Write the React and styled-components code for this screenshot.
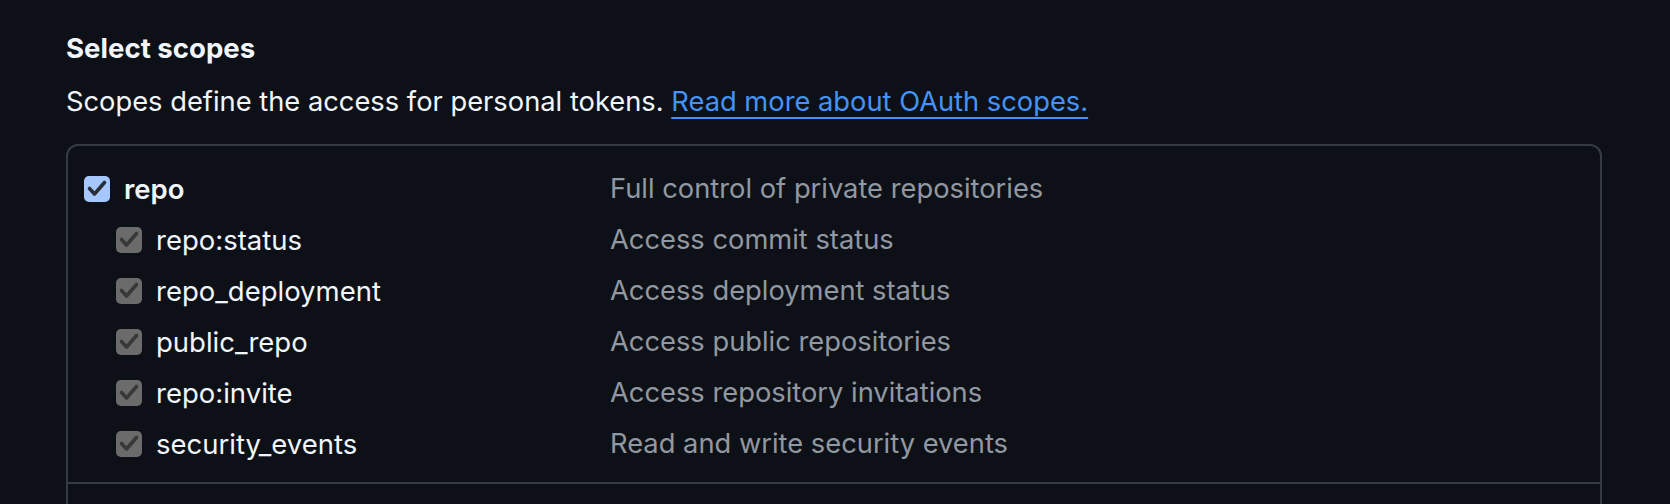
import React from 'react';
import styled, { createGlobalStyle } from 'styled-components';

const GlobalStyle = createGlobalStyle`
  html, body {
    margin: 0;
    padding: 0;
    background: #0d1117;
  }

  body {
    font-family: Inter, 'Noto Sans', 'Liberation Sans', sans-serif;
    color: #f0f6fc;
    -webkit-font-smoothing: antialiased;
  }
`;

const StyledPage = styled.main`
  width: 1670px;
  height: 504px;
  overflow: hidden;
  box-sizing: border-box;
  padding: 28px 0 0 66px;
`;

const Heading = styled.h3`
  margin: 0;
  font-size: 27.6px;
  line-height: 40px;
  font-weight: 700;
  color: #f0f6fc;
`;

const Lead = styled.p`
  margin: 14px 0 0;
  font-size: 27.3px;
  line-height: 40px;
  color: #f0f6fc;

  a {
    color: #4493f8;
    text-decoration: underline;
    text-decoration-thickness: 1.5px;
    text-underline-offset: 6px;
  }
`;

const ScopeBox = styled.div`
  width: 1536px;
  margin-top: 22px;
  box-sizing: border-box;
  border: 2px solid #363b42;
  border-radius: 12px;
  height: 400px;

  .scopes {
    &__list {
      padding: 17px 0 13px 16px;
      border-bottom: 2px solid #363b42;
    }
  }
`;

const Row = styled.label`
  display: grid;
  grid-template-columns: 526px 1fr;
  align-items: center;
  height: 51px;
`;

const Name = styled.span`
  display: flex;
  align-items: center;
  gap: 14px;
  padding-left: ${({ $child }) => ($child ? '32px' : '0')};
  font-size: 27.5px;
  font-weight: ${({ $child }) => ($child ? 400 : 600)};
  color: #f0f6fc;
`;

const Description = styled.span`
  font-size: 27.3px;
  color: #9198a1;
`;

const Box = styled.span`
  display: inline-flex;
  flex: none;
  width: 26px;
  height: 26px;
  border-radius: 5px;
  background: ${({ $disabled }) => ($disabled ? '#6b6b6b' : '#a6c8ff')};

  svg {
    width: 26px;
    height: 26px;
  }
`;

const Checkbox = ({ disabled }) => (
  <Box $disabled={disabled}>
    <svg viewBox="0 0 26 26" fill="none">
      <polyline
        points="5.5,12.5 10.5,18 20.5,6.5"
        stroke={disabled ? '#383838' : '#2b3038'}
        strokeWidth="3.6"
        strokeLinecap="round"
        strokeLinejoin="round"
      />
    </svg>
  </Box>
);

const scopes = [
  { name: 'repo', text: 'Full control of private repositories' },
  { name: 'repo:status', text: 'Access commit status', child: true },
  { name: 'repo_deployment', text: 'Access deployment status', child: true },
  { name: 'public_repo', text: 'Access public repositories', child: true },
  { name: 'repo:invite', text: 'Access repository invitations', child: true },
  { name: 'security_events', text: 'Read and write security events', child: true },
];

const App = () => (
  <>
    <GlobalStyle />
    <StyledPage>
      <Heading>Select scopes</Heading>
      <Lead>
        Scopes define the access for personal tokens. <a href="#scopes">Read more about OAuth scopes.</a>
      </Lead>
      <ScopeBox>
        <div className="scopes__list">
          {scopes.map((scope) => (
            <Row key={scope.name}>
              <Name $child={scope.child}>
                <Checkbox disabled={scope.child} />
                {scope.name}
              </Name>
              <Description>{scope.text}</Description>
            </Row>
          ))}
        </div>
      </ScopeBox>
    </StyledPage>
  </>
);

export default App;
